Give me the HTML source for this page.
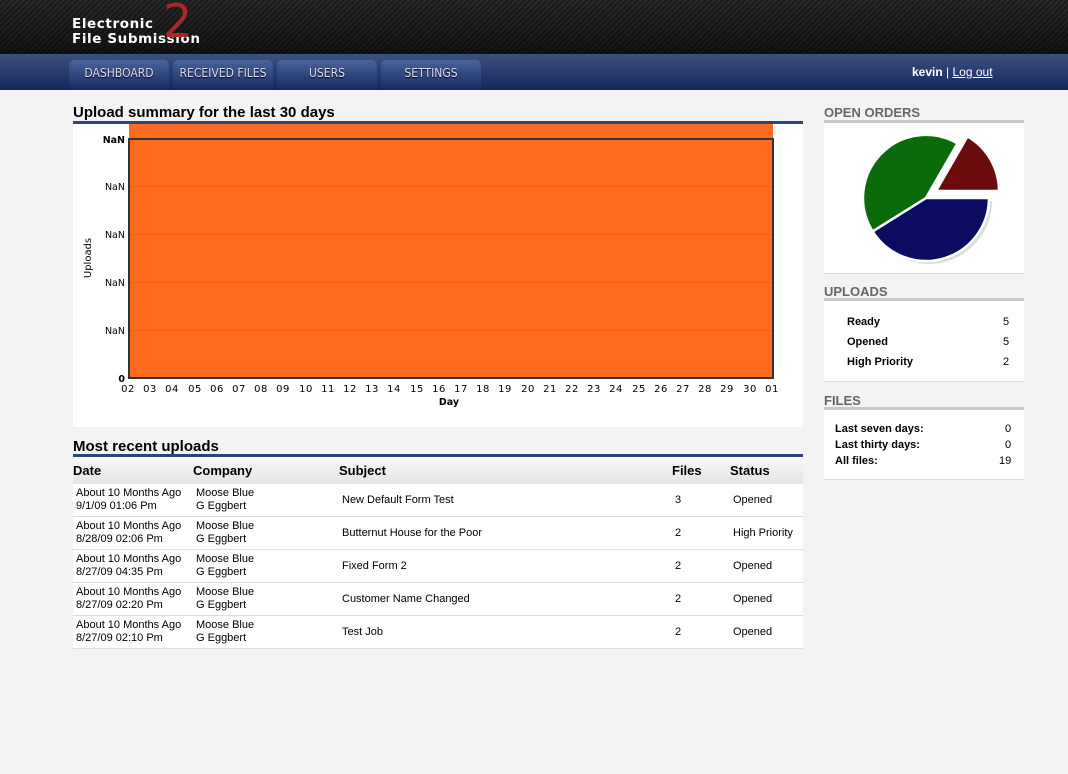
<!DOCTYPE html>
<html><head><meta charset="utf-8"><style>
*{margin:0;padding:0;box-sizing:border-box}
body{width:1068px;height:774px;background:#f3f3f3;font-family:"Liberation Sans",Arial,sans-serif;position:relative;overflow:hidden}
.a{position:absolute}
#hdr{left:0;top:0;width:1068px;height:54px;background:repeating-linear-gradient(135deg,#2a2a2a 0 2px,#1c1c1c 2px 4px)}
#hdr:after{content:"";position:absolute;inset:0;background:linear-gradient(#0000,#0008)}
#nav{left:0;top:54px;width:1068px;height:36px;background:linear-gradient(#3b5280,#14265a)}
.tab{top:60px;height:30px;width:100px;border-radius:5px 5px 0 0;background:linear-gradient(#4a639a,#162a60);color:#d8e0ee;font-size:12px;font-family:"DejaVu Sans Condensed","DejaVu Sans",sans-serif;text-align:center;line-height:27px;text-shadow:0 1px 1px #000}
h2{position:absolute;font-size:15px;font-weight:bold;color:#000}
.bar{position:absolute;height:3px;background:#2d4474}
.sh{position:absolute;font-size:13px;font-weight:bold;color:#666}
.sb{position:absolute;background:#fff;border-top:3px solid #c8c8c8;border-bottom:1px solid #ddd}
.t{position:absolute;font-size:11px;color:#000;line-height:13px}
.b{font-weight:bold}
.th{font-size:13px;font-weight:bold}
.row{position:absolute;left:73px;width:730px;height:33px;background:#fff;border-bottom:1px solid #ddd}
</style></head><body>
<div id="hdr" class="a"></div>
<div class="a" style="left:72px;top:17px;color:#fff;font-weight:bold;line-height:15px;letter-spacing:.6px;font-family:'DejaVu Sans',sans-serif;font-size:13.5px">Electronic<br>File Submission</div>
<div class="a" style="left:163px;top:-6px;color:#a82828;font-size:46px;font-family:'DejaVu Sans',sans-serif">2</div>
<div id="nav" class="a"></div>
<div class="a tab" style="left:69px">DASHBOARD</div>
<div class="a tab" style="left:173px">RECEIVED FILES</div>
<div class="a tab" style="left:277px">USERS</div>
<div class="a tab" style="left:381px">SETTINGS</div>
<div class="a" style="left:912px;top:65px;color:#fff;font-size:12px"><b>kevin</b> | <u>Log out</u></div>

<h2 style="left:73px;top:104px">Upload summary for the last 30 days</h2>
<div class="bar" style="left:73px;top:121px;width:730px"></div>
<div class="a" style="left:73px;top:124px;width:730px;height:303px;background:#fff"></div>
<svg class="a" style="left:0;top:0" width="1068" height="774">
<rect x="129" y="124" width="644" height="254" fill="#ff6a1f"/>
<g stroke="#f06018" stroke-width="1"><line x1="129" y1="186.5" x2="773" y2="186.5"/><line x1="129" y1="234.5" x2="773" y2="234.5"/><line x1="129" y1="282.5" x2="773" y2="282.5"/><line x1="129" y1="330.5" x2="773" y2="330.5"/></g>
<rect x="129" y="139" width="644" height="239" fill="none" stroke="#333" stroke-width="2"/>
<g font-family="DejaVu Sans" font-size="9.5" text-anchor="end" fill="#000">
<text x="125" y="143" font-weight="bold">NaN</text><text x="125" y="190">NaN</text><text x="125" y="238">NaN</text><text x="125" y="286">NaN</text><text x="125" y="334">NaN</text><text x="125" y="382" font-weight="bold">0</text></g>
<text transform="translate(91,258) rotate(-90)" font-family="DejaVu Sans" font-size="10" text-anchor="middle">Uploads</text>
<g font-family="DejaVu Sans" font-size="10" text-anchor="middle" letter-spacing=".5">
<text x="128" y="392">02</text><text x="150" y="392">03</text><text x="172" y="392">04</text><text x="195" y="392">05</text><text x="217" y="392">06</text><text x="239" y="392">07</text><text x="261" y="392">08</text><text x="283" y="392">09</text><text x="306" y="392">10</text><text x="328" y="392">11</text><text x="350" y="392">12</text><text x="372" y="392">13</text><text x="394" y="392">14</text><text x="417" y="392">15</text><text x="439" y="392">16</text><text x="461" y="392">17</text><text x="483" y="392">18</text><text x="505" y="392">19</text><text x="528" y="392">20</text><text x="550" y="392">21</text><text x="572" y="392">22</text><text x="594" y="392">23</text><text x="616" y="392">24</text><text x="639" y="392">25</text><text x="661" y="392">26</text><text x="683" y="392">27</text><text x="705" y="392">28</text><text x="727" y="392">29</text><text x="750" y="392">30</text><text x="772" y="392">01</text></g>
<text x="449" y="405" font-family="DejaVu Sans" font-size="9.5" font-weight="bold" text-anchor="middle">Day</text>
</svg>

<h2 style="left:73px;top:438px">Most recent uploads</h2>
<div class="bar" style="left:73px;top:454px;width:730px"></div>
<div class="a" style="left:73px;top:457px;width:730px;height:27px;background:linear-gradient(#f8f8f8,#e4e4e4)"></div>
<div class="t th" style="left:73px;top:464px">Date</div>
<div class="t th" style="left:193px;top:464px">Company</div>
<div class="t th" style="left:339px;top:464px">Subject</div>
<div class="t th" style="left:672px;top:464px">Files</div>
<div class="t th" style="left:730px;top:464px">Status</div>

<div class="row" style="top:484px"></div><div class="row" style="top:517px"></div><div class="row" style="top:550px"></div><div class="row" style="top:583px"></div><div class="row" style="top:616px"></div>

<div class="t" style="left:76px;top:487px">About 10 Months Ago<br>9/1/09 01:06 Pm</div><div class="t" style="left:196px;top:487px">Moose Blue<br>G Eggbert</div><div class="t" style="left:342px;top:494px">New Default Form Test</div><div class="t" style="left:675px;top:494px">3</div><div class="t" style="left:733px;top:494px">Opened</div>
<div class="t" style="left:76px;top:520px">About 10 Months Ago<br>8/28/09 02:06 Pm</div><div class="t" style="left:196px;top:520px">Moose Blue<br>G Eggbert</div><div class="t" style="left:342px;top:527px">Butternut House for the Poor</div><div class="t" style="left:675px;top:527px">2</div><div class="t" style="left:733px;top:527px">High Priority</div>
<div class="t" style="left:76px;top:553px">About 10 Months Ago<br>8/27/09 04:35 Pm</div><div class="t" style="left:196px;top:553px">Moose Blue<br>G Eggbert</div><div class="t" style="left:342px;top:560px">Fixed Form 2</div><div class="t" style="left:675px;top:560px">2</div><div class="t" style="left:733px;top:560px">Opened</div>
<div class="t" style="left:76px;top:586px">About 10 Months Ago<br>8/27/09 02:20 Pm</div><div class="t" style="left:196px;top:586px">Moose Blue<br>G Eggbert</div><div class="t" style="left:342px;top:593px">Customer Name Changed</div><div class="t" style="left:675px;top:593px">2</div><div class="t" style="left:733px;top:593px">Opened</div>
<div class="t" style="left:76px;top:619px">About 10 Months Ago<br>8/27/09 02:10 Pm</div><div class="t" style="left:196px;top:619px">Moose Blue<br>G Eggbert</div><div class="t" style="left:342px;top:626px">Test Job</div><div class="t" style="left:675px;top:626px">2</div><div class="t" style="left:733px;top:626px">Opened</div>

<div class="sh" style="left:824px;top:105px">OPEN ORDERS</div>
<div class="sb" style="left:824px;top:120px;width:200px;height:154px"></div>
<svg class="a" style="left:0;top:0" width="1068" height="774">
<g stroke="#fff" stroke-width="2.5">
<path d="M929,201 L992,201 A63,63 0 0 1 875.6,234.4 Z" fill="#ddd" stroke="none"/>
<path d="M926,198 L989,198 A63,63 0 0 1 872.6,231.4 Z" fill="#0b0b62"/>
<path d="M926,198 L872.6,231.4 A63,63 0 0 1 957.5,143.4 Z" fill="#0b6b0b"/>
<path d="M936,191 L967.5,136.4 A63,63 0 0 1 999,191 Z" fill="#6b0b0b"/>
</g></svg>

<div class="sh" style="left:824px;top:284px">UPLOADS</div>
<div class="sb" style="left:824px;top:298px;width:200px;height:84px"></div>
<div class="t b" style="left:847px;top:316px">Ready</div><div class="t" style="left:1003px;top:316px">5</div>
<div class="t b" style="left:847px;top:336px">Opened</div><div class="t" style="left:1003px;top:336px">5</div>
<div class="t b" style="left:847px;top:356px">High Priority</div><div class="t" style="left:1003px;top:356px">2</div>

<div class="sh" style="left:824px;top:393px">FILES</div>
<div class="sb" style="left:824px;top:407px;width:200px;height:73px"></div>
<div class="t b" style="left:835px;top:423px">Last seven days:</div><div class="t" style="left:1005px;top:423px">0</div>
<div class="t b" style="left:835px;top:439px">Last thirty days:</div><div class="t" style="left:1005px;top:439px">0</div>
<div class="t b" style="left:835px;top:455px">All files:</div><div class="t" style="left:999px;top:455px">19</div>
</body></html>
